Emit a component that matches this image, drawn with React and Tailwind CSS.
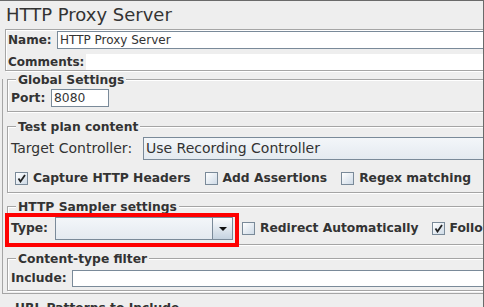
import React from "react";

const etched = "border border-[#a5a5a5] shadow-[inset_1px_1px_0_#ffffff,1px_1px_0_#ffffff]";

function Check({ checked }) {
  return (
    <span className="w-[13px] h-[13px] shrink-0 border border-[#7a8a99] bg-gradient-to-br from-white to-[#cfdbe7] flex items-center justify-center">
      {checked && (
        <svg width="9" height="9" viewBox="0 0 9 9">
          <path d="M1.5 4.5 L3.5 7.5 L8 1" stroke="#222" strokeWidth="1.8" fill="none" />
        </svg>
      )}
    </span>
  );
}

function CheckItem({ label, checked, className = "" }) {
  return (
    <div className={`flex items-center h-[19px] gap-[5px] font-bold text-[12.3px] whitespace-nowrap ${className}`}>
      <Check checked={checked} />
      <span>{label}</span>
    </div>
  );
}

function Combo({ value, arrow, className = "" }) {
  return (
    <div className={`h-[23px] flex border border-[#7a8a99] bg-gradient-to-b from-[#f3f6f9] to-[#e4eaf0] ${className}`}>
      <div className="flex-1 pl-[2px] leading-[21px] text-[14px] whitespace-nowrap">{value}</div>
      {arrow && (
        <div className="w-[20px] border-l border-[#7a8a99] bg-gradient-to-b from-[#fbfcfd] to-[#c5d3e0] flex items-center justify-center">
          <svg width="8" height="4" viewBox="0 0 8 4">
            <path d="M0 0 H8 L4 4 Z" fill="#111" />
          </svg>
        </div>
      )}
    </div>
  );
}

function Group({ title, className = "", children }) {
  return (
    <div className={`ml-[4px] -mr-[20px] pl-[3px] ${etched} ${className}`}>
      <div className="-mt-[7px] ml-[5px] px-[2px] w-fit bg-[#eeeeee] leading-[15px] font-bold text-[12.3px]">
        {title}
      </div>
      {children}
    </div>
  );
}

export default function App() {
  return (
    <div className="w-[484px] h-[307px] overflow-hidden bg-[#eeeeee] border-t border-r border-[#6a6a6a] text-[#333333] font-['DejaVu_Sans',sans-serif]">
      <div className="h-[28px] pl-[6px] text-[18px] leading-[27px]">HTTP Proxy Server</div>

      <div className={`ml-[5px] -mr-[20px] pl-[2px] ${etched}`}>
        <div className="mt-[1px] flex h-[18px]">
          <div className="w-[49px] font-bold text-[12px] leading-[18px]">Name:</div>
          <div className="flex-1 border border-[#7a8a99] bg-white pl-[2px] text-[12px] leading-[16px]">
            HTTP Proxy Server
          </div>
        </div>
        <div className="mt-[5px] flex h-[16px]">
          <div className="w-[78px] font-bold text-[12px] leading-[16px]">Comments:</div>
          <div className="flex-1 bg-white" />
        </div>
      </div>

      <div className="mt-[4px] ml-[2px] -mr-[20px] border-l border-b border-[#a5a5a5] pb-[2px]">
        <Group title="Global Settings" className="mt-[8px] pb-[4px]">
          <div className="mt-[1px] flex h-[18px]">
            <div className="w-[40px] font-bold text-[12.3px] leading-[18px]">Port:</div>
            <div className="w-[58px] border border-[#7a8a99] bg-white pl-[2px] text-[12.3px] leading-[16px]">8080</div>
          </div>
        </Group>

        <Group title="Test plan content" className="mt-[14px] pb-[4px]">
          <div className="mt-[2px] flex items-center">
            <div className="w-[132px] text-[14px] leading-[23px] whitespace-nowrap">Target Controller:</div>
            <Combo value="Use Recording Controller" className="flex-1" />
          </div>
          <div className="mt-[9px] flex pl-[4px]">
            <CheckItem label="Capture HTTP Headers" checked />
            <CheckItem label="Add Assertions" className="ml-[14px]" />
            <CheckItem label="Regex matching" className="ml-[14px]" />
          </div>
        </Group>

        <Group title="HTTP Sampler settings" className="mt-[13px] pb-[4px]">
          <div className="mt-[2px] flex items-center">
            <div className="relative flex items-center">
              <div className="w-[44px] font-bold text-[12.3px] leading-[23px]">Type:</div>
              <Combo value="" arrow className="w-[178px]" />
              <span className="absolute -left-[6px] -top-[4px] w-[234px] h-[34px] border-4 border-[#ff0000] pointer-events-none" />
            </div>
            <CheckItem label="Redirect Automatically" className="ml-[9px]" />
            <CheckItem label="Follow Redirects" checked className="ml-[13px]" />
          </div>
        </Group>

        <Group title="Content-type filter" className="mt-[13px] pb-[3px]">
          <div className="mt-[3px] flex h-[17px]">
            <div className="w-[61px] font-bold text-[12.3px] leading-[17px]">Include:</div>
            <div className="flex-1 border border-[#7a8a99] bg-white" />
          </div>
        </Group>
      </div>

      <Group title="URL Patterns to Include" className="mt-[13px] h-[40px]" />
    </div>
  );
}
